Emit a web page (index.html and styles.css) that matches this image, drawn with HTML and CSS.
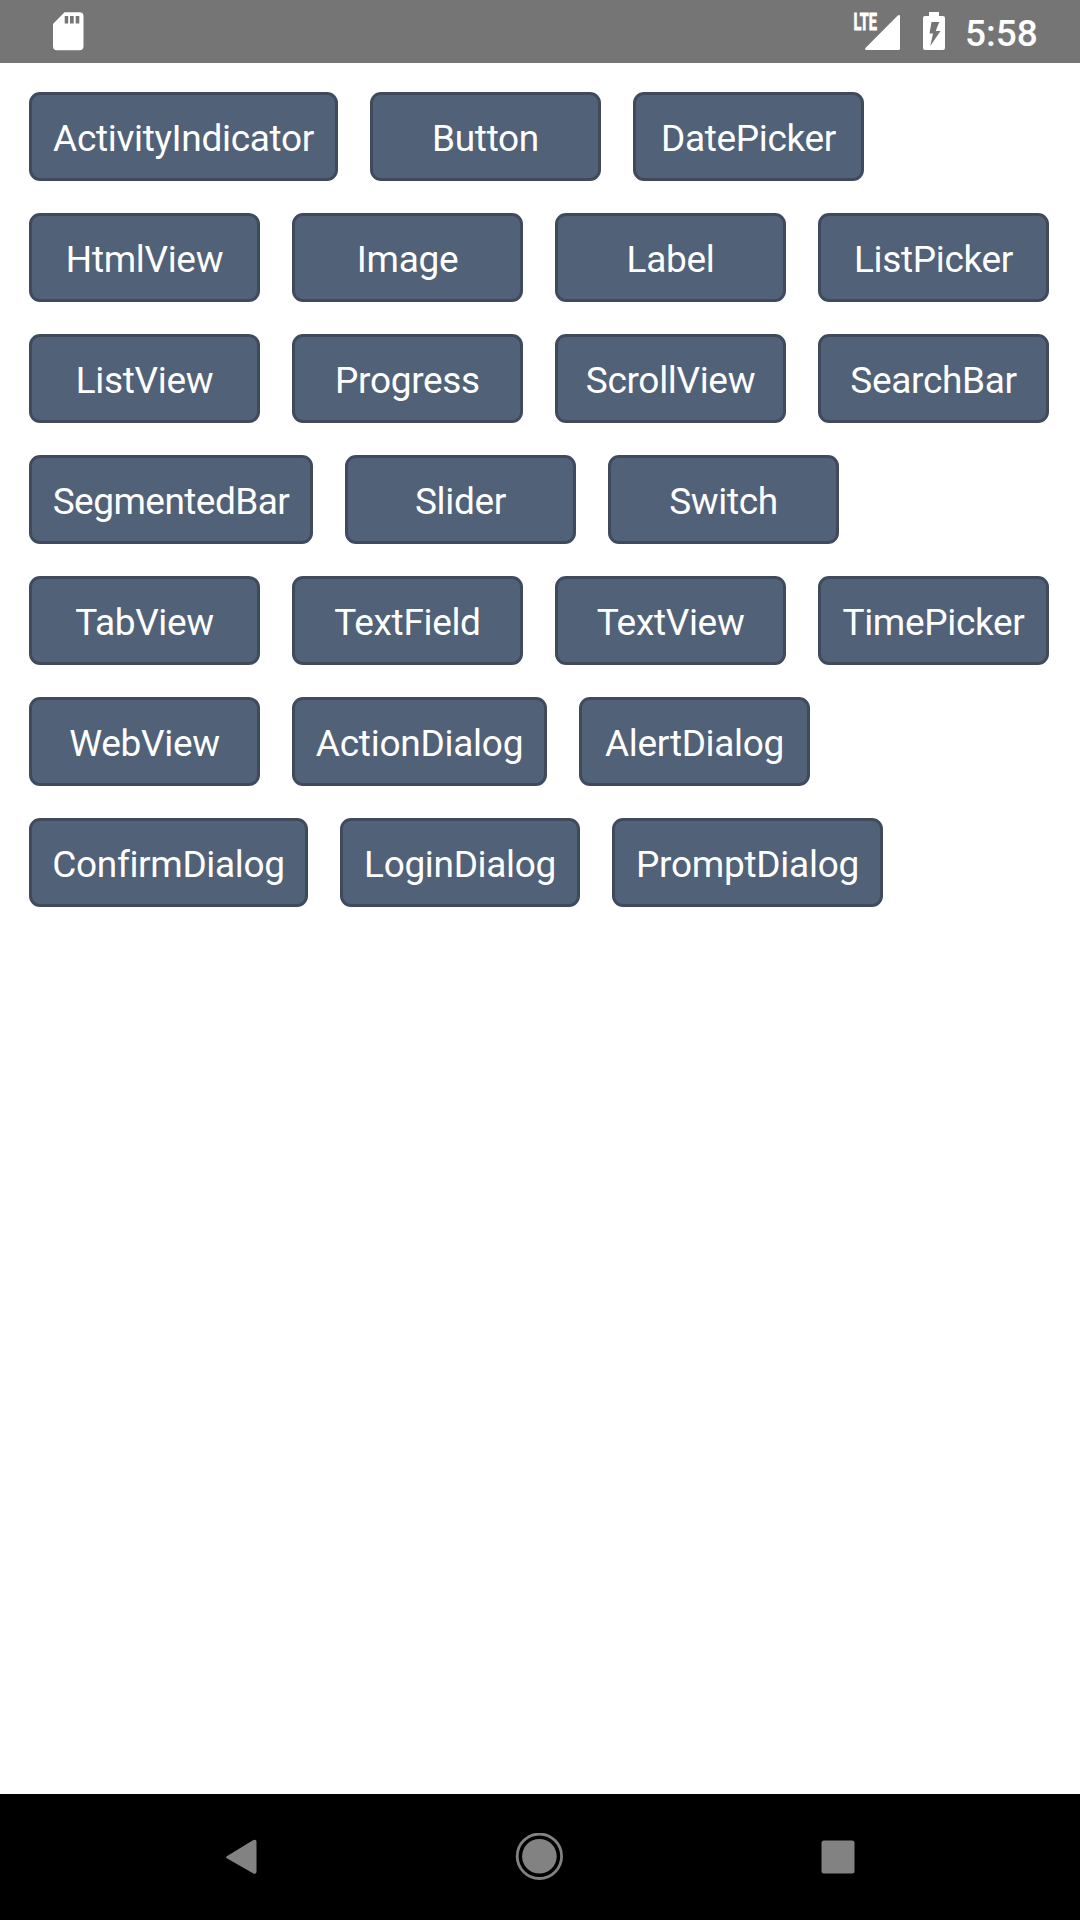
FILE: index.html
```html
<!DOCTYPE html>
<html lang="en">
<head>
<meta charset="utf-8">
<title>Widgets</title>
<link rel="stylesheet" href="styles.css">
</head>
<body>
<header class="status-bar">
  <svg class="sd-card" width="30" height="38" viewBox="0 0 30 38"><path fill="#fff" fill-rule="evenodd" d="M11.5 0.300H26.500Q30.500 0.300 30.500 4.300V34.300Q30.500 38.300 26.500 38.300H4Q0 38.300 0 34.300V12ZM11.700 4V11.500H15.200V4ZM17 4V11.500H20.700V4ZM22.700 4V11.500H26.300V4Z"/></svg>
  <div class="status-icons">
    <svg class="signal" width="48" height="40" viewBox="0 0 48 40"><text class="lte" x="1.500" y="18" textLength="23.500" lengthAdjust="spacingAndGlyphs">LTE</text><path fill="#fff" d="M45.500 3.700Q48 1.800 48 4.300V36.500Q48 38 46.500 38H14.500Q12 38 13.700 35.800Z"/></svg>
    <svg class="battery" width="22" height="38" viewBox="0 0 22 38"><path fill="#fff" fill-rule="evenodd" d="M6 0H16V4H20Q22 4 22 6V36Q22 38 20 38H2Q0 38 0 36V6Q0 4 2 4H6ZM8.500 10L6.500 21.500H10L7.300 34L17.500 19H12.700L16.300 10Z"/></svg>
    <span class="clock">5:58</span>
  </div>
</header>
<main class="widgets">
  <div class="row"><button class="btn btn-activity">ActivityIndicator</button><button class="btn">Button</button><button class="btn">DatePicker</button></div>
  <div class="row"><button class="btn">HtmlView</button><button class="btn">Image</button><button class="btn">Label</button><button class="btn">ListPicker</button></div>
  <div class="row"><button class="btn">ListView</button><button class="btn">Progress</button><button class="btn">ScrollView</button><button class="btn">SearchBar</button></div>
  <div class="row"><button class="btn btn-segmented">SegmentedBar</button><button class="btn">Slider</button><button class="btn">Switch</button></div>
  <div class="row"><button class="btn">TabView</button><button class="btn">TextField</button><button class="btn">TextView</button><button class="btn">TimePicker</button></div>
  <div class="row"><button class="btn">WebView</button><button class="btn btn-action">ActionDialog</button><button class="btn">AlertDialog</button></div>
  <div class="row"><button class="btn btn-confirm">ConfirmDialog</button><button class="btn btn-login">LoginDialog</button><button class="btn btn-prompt">PromptDialog</button></div>
</main>
<nav class="nav-bar">
  <svg width="48" height="48" viewBox="0 0 48 48"><path fill="#828282" d="M11.200 23L37 7.300Q40.500 5.500 40.500 9V38.500Q40.500 42 37 40.300L11.200 25.500Q9 24.200 11.200 23Z"/></svg>
  <svg width="48" height="48" viewBox="0 0 48 48"><circle cx="24.400" cy="23.300" r="17.300" fill="#828282"/><circle cx="24.400" cy="23.300" r="22.200" fill="none" stroke="#828282" stroke-width="2.800"/></svg>
  <svg width="48" height="48" viewBox="0 0 48 48"><rect x="7.500" y="7.500" width="33" height="33" rx="2.500" fill="#828282"/></svg>
</nav>
</body>
</html>
```
FILE: styles.css
```css
* { box-sizing: border-box; }
body {
  margin: 0;
  height: 1920px;
  display: flex;
  flex-direction: column;
  background: #fff;
  font-family: Roboto, "Liberation Sans", sans-serif;
}
.status-bar {
  height: 63px;
  padding: 12px 42px 0 53.300px;
  display: flex;
  align-items: flex-start;
  justify-content: space-between;
  background: #757575;
  color: #fff;
}
.status-bar svg { display: block; overflow: visible; }
.status-icons { display: flex; align-items: flex-start; }
.battery { margin: 0 20px 0 23px; }
.lte { font-size: 23px; font-weight: 700; fill: #fff; stroke: #fff; stroke-width: 0.8px; }
.clock {
  width: 73px;
  font-size: 37px;
  font-weight: 500;
  line-height: 43px;
}
.widgets {
  flex: 1;
  padding: 29px;
  display: flex;
  flex-direction: column;
  gap: 32px;
}
.row { display: flex; gap: 32px; }
.btn {
  flex: none;
  width: 231px;
  height: 89px;
  padding: 3px 0 0;
  border: 3px solid #3f4b5d;
  border-radius: 11px;
  background: #516178;
  color: #fff;
  font: 400 37px/43px Roboto, "Liberation Sans", sans-serif;
  letter-spacing: -0.33px;
  white-space: nowrap;
}
.btn-activity { width: 309px; }
.btn-segmented { width: 284px; letter-spacing: -0.55px; }
.btn-action { width: 255px; letter-spacing: -0.25px; }
.btn-confirm { width: 279px; }
.btn-login { width: 240px; }
.btn-prompt { width: 271px; letter-spacing: -0.25px; }
.nav-bar {
  height: 126px;
  padding: 0 218px 0 216px;
  display: flex;
  align-items: center;
  justify-content: space-between;
  background: #000;
}
```
